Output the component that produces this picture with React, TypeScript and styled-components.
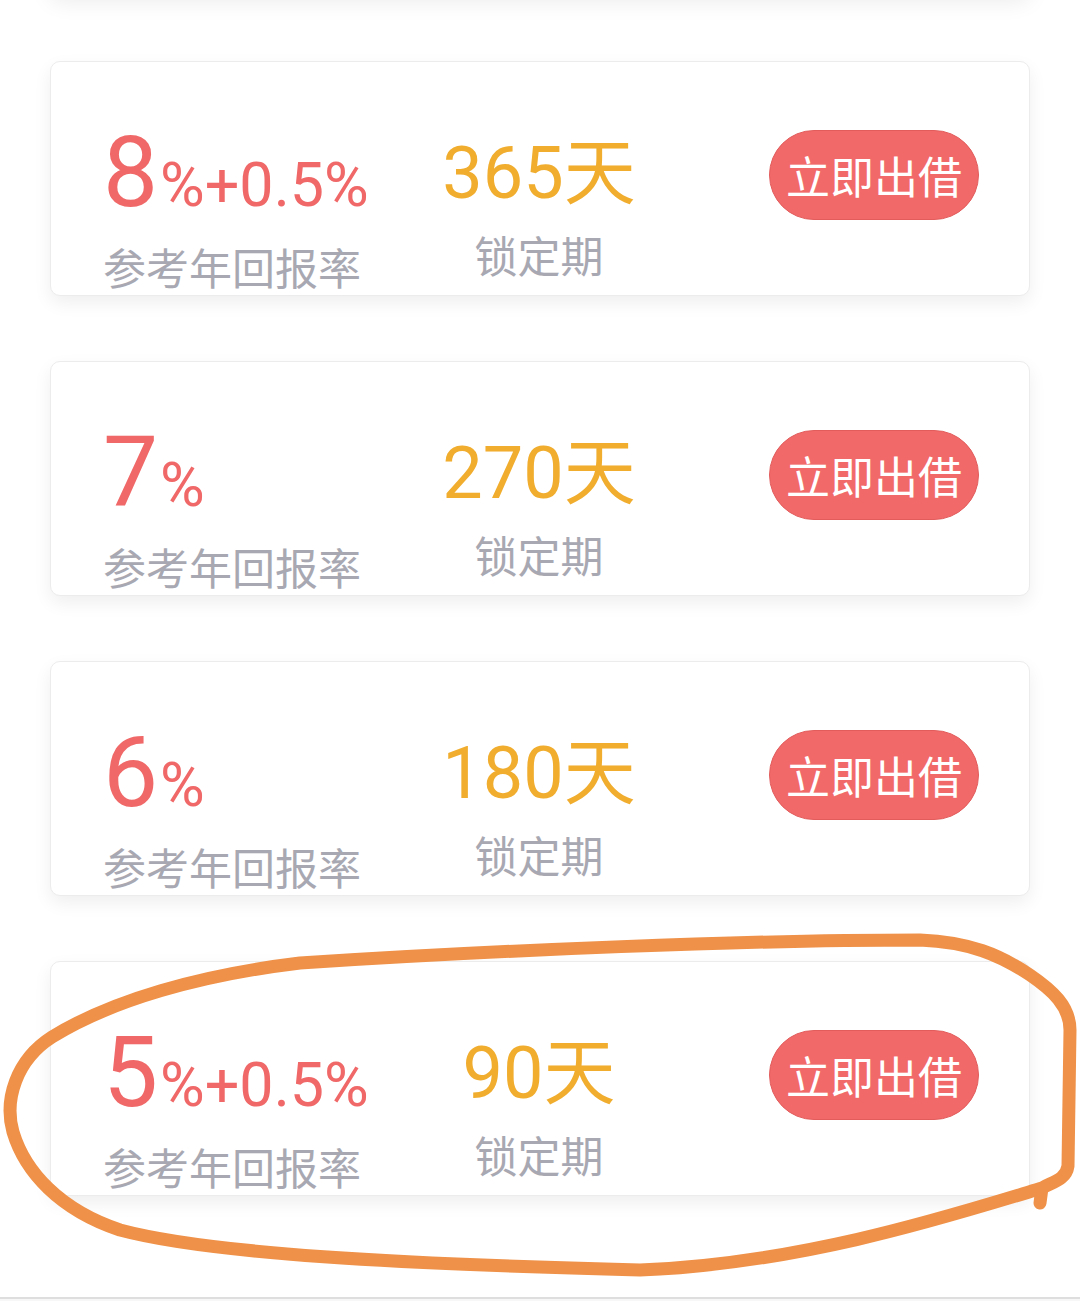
import React from 'react';
import styled, { createGlobalStyle } from 'styled-components';

const GlobalStyle = createGlobalStyle`
  html, body {
    margin: 0;
    padding: 0;
    background: #ffffff;
  }
  * {
    box-sizing: border-box;
  }
`;

const Page = styled.div`
  position: relative;
  height: 1301px;
  overflow: hidden;
  background: #ffffff;
  font-family: Roboto, 'Noto Sans CJK SC', sans-serif;
`;

const List = styled.div`
  display: flex;
  flex-direction: column;
  gap: 65px;
  padding: 0 50px;
`;

const Card = styled.div<{ $hidden?: boolean }>`
  display: flex;
  align-items: flex-start;
  height: 235px;
  margin-top: ${(p) => (p.$hidden ? '-241px' : '0')};
  margin-bottom: ${(p) => (p.$hidden ? '2px' : '0')};
  padding: 0 50px 0 52px;
  background: #ffffff;
  border: 1px solid #ececec;
  border-radius: 10px;
  box-shadow: ${(p) =>
    p.$hidden ? '0 8px 22px rgba(0, 0, 0, 0.08)' : '0 7px 18px rgba(0, 0, 0, 0.065)'};
`;

const RateCol = styled.div`
  width: 316px;
  margin-top: 62px;
`;

const Rate = styled.div`
  display: flex;
  align-items: baseline;
  height: 98px;
  line-height: 98px;
  color: #f06868;
  font-family: Roboto, sans-serif;
`;

const RateBig = styled.span`
  font-size: 98px;
`;

const RateSmall = styled.span`
  font-size: 61px;
  margin-left: 2px;
`;

const Label = styled.div<{ $gap: number }>`
  margin-top: ${(p) => p.$gap}px;
  height: 50px;
  line-height: 50px;
  font-size: 43px;
  color: #a8a8b2;
  font-family: 'Noto Sans CJK SC', sans-serif;
  white-space: nowrap;
`;

const TermCol = styled.div`
  width: 240px;
  margin-top: 76px;
  text-align: center;
`;

const Term = styled.div`
  height: 72px;
  line-height: 72px;
  font-size: 72px;
  color: #f0ad2e;
  font-family: Roboto, 'Noto Sans CJK SC', sans-serif;
  white-space: nowrap;
`;

const LendButton = styled.button`
  margin-left: auto;
  margin-top: 68px;
  width: 210px;
  height: 90px;
  border: 1px solid #e25c5c;
  border-radius: 45px;
  background: #f26969;
  color: #ffffff;
  font-size: 44px;
  font-family: 'Noto Sans CJK SC', sans-serif;
  padding: 0;
  line-height: 88px;
  cursor: pointer;
`;

const Footer = styled.div`
  position: absolute;
  left: 0;
  right: 0;
  bottom: 0;
  height: 4px;
  border-top: 2px solid #dedede;
  background: #f7f7f7;
`;

const Annotation = styled.svg`
  position: absolute;
  left: 0;
  top: 0;
  pointer-events: none;
`;

type Product = { base: string; extra: string; days: string };

const products: Product[] = [
  { base: '8', extra: '%+0.5%', days: '365天' },
  { base: '7', extra: '%', days: '270天' },
  { base: '6', extra: '%', days: '180天' },
  { base: '5', extra: '%+0.5%', days: '90天' },
];

function ProductCard({ p }: { p: Product }) {
  return (
    <Card>
      <RateCol>
        <Rate>
          <RateBig>{p.base}</RateBig>
          <RateSmall>{p.extra}</RateSmall>
        </Rate>
        <Label $gap={19}>参考年回报率</Label>
      </RateCol>
      <TermCol>
        <Term>{p.days}</Term>
        <Label $gap={19}>锁定期</Label>
      </TermCol>
      <LendButton>立即出借</LendButton>
    </Card>
  );
}

// hand-drawn marker circle around the last product
const markerPath = `
  M 1040 1203 L 1042 1188
  C 1052 1182, 1066 1180, 1068 1166
  L 1070 1030
  C 1070 1006, 1052 990, 1030 975
  C 1000 955, 970 942, 920 940
  C 750 940, 500 950, 300 963
  C 200 975, 112 1000, 52 1037
  C 16 1060, 4 1100, 13 1132
  C 25 1172, 60 1210, 120 1230
  C 210 1254, 400 1264, 640 1270
  C 800 1264, 950 1216, 1042 1188
`;

export default function App() {
  return (
    <Page>
      <GlobalStyle />
      <List>
        <Card $hidden />
        {products.map((p) => (
          <ProductCard key={p.days} p={p} />
        ))}
      </List>
      <Footer />
      <Annotation width="1080" height="1301" viewBox="0 0 1080 1301">
        <path
          d={markerPath}
          fill="none"
          stroke="#ef9148"
          strokeWidth="13"
          strokeLinecap="round"
          strokeLinejoin="round"
        />
      </Annotation>
    </Page>
  );
}
